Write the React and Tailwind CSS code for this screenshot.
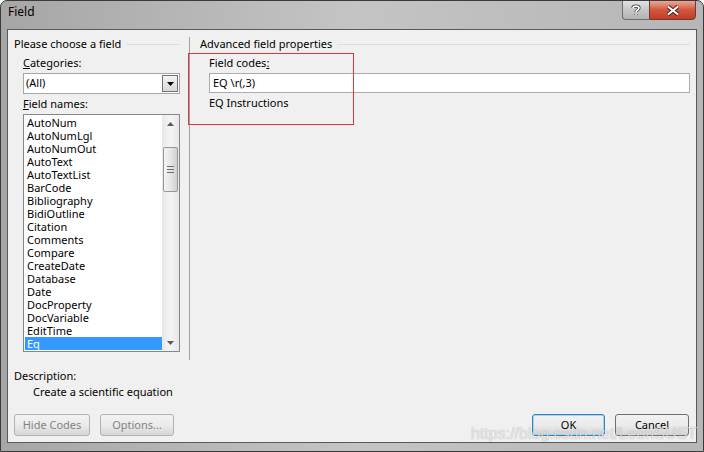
import React from "react";

const fields = [
  "AutoNum",
  "AutoNumLgl",
  "AutoNumOut",
  "AutoText",
  "AutoTextList",
  "BarCode",
  "Bibliography",
  "BidiOutline",
  "Citation",
  "Comments",
  "Compare",
  "CreateDate",
  "Database",
  "Date",
  "DocProperty",
  "DocVariable",
  "EditTime",
  "Eq",
];

function GroupHeading({ children }) {
  return (
    <div className="flex items-center h-[16px]">
      <span className="whitespace-nowrap">{children}</span>
      <div className="ml-[5px] flex-1 h-px bg-[#d5dfe5]" />
    </div>
  );
}

function Tri({ up }) {
  return (
    <svg width="7" height="4" viewBox="0 0 7 4">
      {up ? (
        <path d="M0 4 L3.5 0 L7 4 Z" fill="#5a5a5a" />
      ) : (
        <path d="M0 0 L3.5 4 L7 0 Z" fill="#5a5a5a" />
      )}
    </svg>
  );
}

function Button({ label, disabled, isDefault, className = "" }) {
  return (
    <div
      className={`h-[22px] flex items-center justify-center rounded-[3px] border bg-linear-to-b from-[#f2f2f2] via-[#ebebeb] to-[#d6d6d6] ${
        isDefault
          ? "border-[#3c7fb1] shadow-[inset_0_0_0_1px_#9fd5f5]"
          : disabled
          ? "border-[#adb2b5]"
          : "border-[#707070]"
      } ${disabled ? "text-[#838383]" : "text-black"} ${className}`}
    >
      {label}
    </div>
  );
}

export default function App() {
  return (
    <div className="w-[704px] h-[452px] bg-white">
      <div className="relative w-[704px] h-[452px] flex flex-col rounded-t-[7px] border border-[#3a3a3a] bg-linear-to-r from-[#a6a6a6] via-[#c4c4c4] to-[#b6b6b6] overflow-hidden font-['Noto_Sans',sans-serif] text-[11px] text-black">
        {/* title bar */}
        <div className="h-[28px] flex items-start">
          <span className="mt-[3px] ml-[7px] text-[12px] leading-[16px]">Field</span>
          <div className="flex-1" />
          <div className="mr-[7px] -mt-px flex h-[20px]">
            <div className="w-[27px] h-full flex items-center justify-center rounded-bl-[4px] border border-[#6e6e6e] border-r-0 bg-linear-to-b from-[#e2e2e2] via-[#c6c6c6] to-[#b2b2b2]">
              <svg width="10" height="12" viewBox="0 0 10 12">
                <path
                  d="M2 4 C2 1.5 8 1.5 8 4 C8 6 5 6 5 8 M5 10 L5 11"
                  fill="none"
                  stroke="#3a3a3a"
                  strokeWidth="3.2"
                />
                <path
                  d="M2 4 C2 1.5 8 1.5 8 4 C8 6 5 6 5 8 M5 10 L5 11"
                  fill="none"
                  stroke="#ffffff"
                  strokeWidth="1.6"
                />
              </svg>
            </div>
            <div className="w-[47px] h-full flex items-center justify-center rounded-br-[4px] border border-[#6e3a30] bg-linear-to-b from-[#e8a898] via-[#d2563c] to-[#c23c22]">
              <svg width="14" height="11" viewBox="0 0 14 11">
                <path d="M2 1.5 L12 9.5 M12 1.5 L2 9.5" stroke="#4a2018" strokeWidth="4" />
                <path d="M2 1.5 L12 9.5 M12 1.5 L2 9.5" stroke="#ffffff" strokeWidth="2.2" />
              </svg>
            </div>
          </div>
        </div>

        {/* client area */}
        <div className="relative mx-[6px] h-[414px] border border-[#5a5a5a] bg-[#f0f0f0] flex flex-col">
          <div className="flex pl-[6px] pr-[6px] pt-[6px] h-[338px]">
            {/* left column */}
            <div className="w-[166px] flex flex-col">
              <GroupHeading>Please choose a field</GroupHeading>
              <div className="ml-[9px] mt-[3px] h-[16px] leading-[16px]">
                <span className="underline">C</span>ategories:
              </div>
              <div className="ml-[9px] mt-[2px] h-[21px] border border-[#a6a6a6] bg-white flex items-center">
                <span className="ml-[2px] flex-1">(All)</span>
                <div className="mr-px w-[16px] h-[17px] border border-[#707070] bg-linear-to-b from-[#f4f4f4] to-[#d8d8d8] flex items-center justify-center">
                  <svg width="7" height="4" viewBox="0 0 7 4">
                    <path d="M0 0 L3.5 4 L7 0 Z" fill="#000" />
                  </svg>
                </div>
              </div>
              <div className="ml-[9px] mt-[2px] h-[16px] leading-[16px]">
                <span className="underline">F</span>ield names:
              </div>
              <div className="ml-[9px] mt-[2px] h-[238px] border border-[#828790] bg-white flex">
                <div className="flex-1 pt-px pl-px">
                  {fields.map((f) => (
                    <div
                      key={f}
                      className={`h-[13px] leading-[13px] pl-[2px] ${
                        f === "Eq" ? "bg-[#3399ff] text-white" : ""
                      }`}
                    >
                      {f}
                    </div>
                  ))}
                </div>
                <div className="w-[17px] flex flex-col bg-linear-to-r from-[#e8e8e8] via-[#f4f4f4] to-[#e8e8e8]">
                  <div className="h-[17px] flex items-center justify-center">
                    <Tri up />
                  </div>
                  <div className="flex-1 pt-[15px] px-px">
                    <div className="h-[45px] rounded-[2px] border border-[#979797] bg-linear-to-r from-[#f4f4f4] via-[#e6e6e6] to-[#d0d0d0] flex flex-col items-center justify-center gap-[2px]">
                      <div className="w-[7px] h-px bg-[#6e6e6e]" />
                      <div className="w-[7px] h-px bg-[#6e6e6e]" />
                      <div className="w-[7px] h-px bg-[#6e6e6e]" />
                    </div>
                  </div>
                  <div className="h-[17px] flex items-center justify-center">
                    <Tri />
                  </div>
                </div>
              </div>
            </div>

            {/* separator */}
            <div className="ml-[9px] mt-px w-px h-[323px] bg-[#a0a0a0]" />

            {/* right column */}
            <div className="ml-[10px] flex-1 flex flex-col">
              <GroupHeading>Advanced field properties</GroupHeading>
              <div className="ml-[9px] mt-[3px] h-[16px] leading-[16px]">
                Field codes<span className="underline">:</span>
              </div>
              <div className="ml-[9px] mt-[2px] h-[20px] border border-[#abadb3] bg-white flex items-center">
                <span className="ml-[3px]">EQ \r(,3)</span>
              </div>
              <div className="ml-[9px] mt-[2px] h-[16px] leading-[16px]">EQ Instructions</div>
            </div>
          </div>

          {/* description */}
          <div className="pl-[6px] h-[16px] leading-[16px]">Description:</div>
          <div className="pl-[25px] h-[16px] leading-[16px]">Create a scientific equation</div>

          {/* buttons */}
          <div className="mt-[14px] flex pl-[6px] pr-[7px]">
            <Button label="Hide Codes" disabled className="w-[76px]" />
            <Button label="Options..." disabled className="ml-[10px] w-[74px]" />
            <div className="flex-1" />
            <Button label="OK" isDefault className="w-[73px]" />
            <Button label="Cancel" className="ml-[10px] w-[74px]" />
          </div>

          {/* annotation rectangle */}
          <div className="absolute left-[180px] top-[23px] w-[166px] h-[72px] border border-[#e0353b]" />
        </div>

        {/* watermark */}
        <div className="absolute left-[470px] top-[421px] font-['Liberation_Sans',sans-serif] text-[16px] text-white/70 [text-shadow:0_0_1px_rgba(0,0,0,0.35)] whitespace-nowrap">
          https://blog.csdn.net/LeonSUST
        </div>
      </div>
    </div>
  );
}
